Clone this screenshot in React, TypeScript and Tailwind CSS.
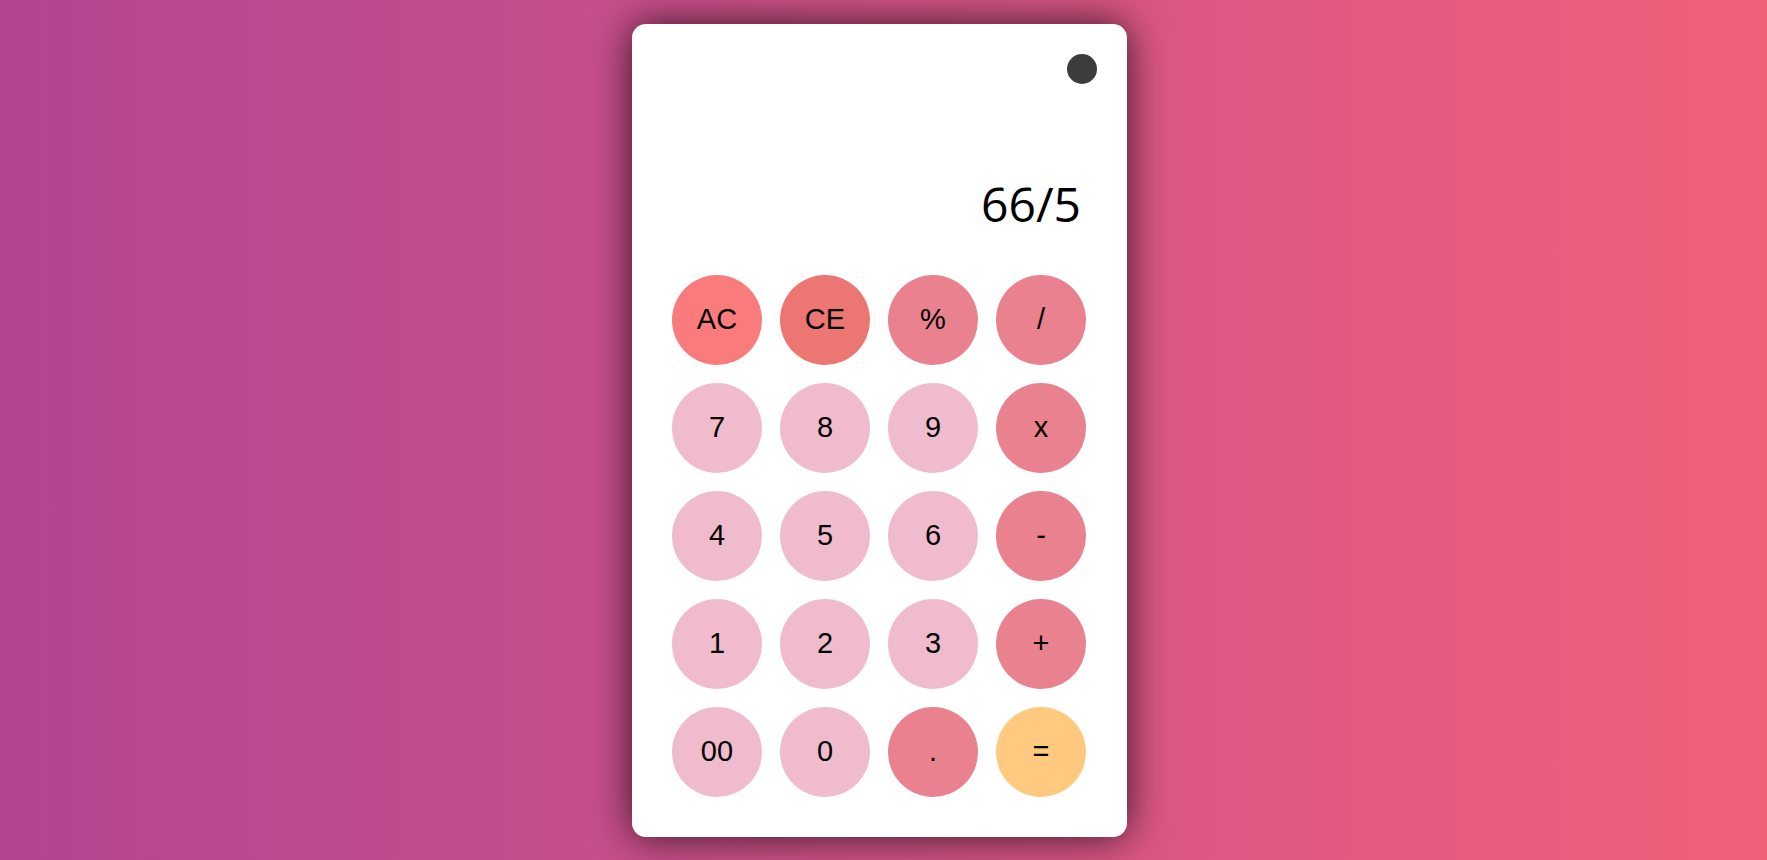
export default function App() {
  const keys: { label: string; color: string }[] = [
    { label: "AC", color: "bg-[#fa7b7b]" },
    { label: "CE", color: "bg-[#ec7672]" },
    { label: "%", color: "bg-[#ea818f]" },
    { label: "/", color: "bg-[#ea818f]" },
    { label: "7", color: "bg-[#f0bccd]" },
    { label: "8", color: "bg-[#f0bccd]" },
    { label: "9", color: "bg-[#f0bccd]" },
    { label: "x", color: "bg-[#ea818f]" },
    { label: "4", color: "bg-[#f0bccd]" },
    { label: "5", color: "bg-[#f0bccd]" },
    { label: "6", color: "bg-[#f0bccd]" },
    { label: "-", color: "bg-[#ea818f]" },
    { label: "1", color: "bg-[#f0bccd]" },
    { label: "2", color: "bg-[#f0bccd]" },
    { label: "3", color: "bg-[#f0bccd]" },
    { label: "+", color: "bg-[#ea818f]" },
    { label: "00", color: "bg-[#f0bccd]" },
    { label: "0", color: "bg-[#f0bccd]" },
    { label: ".", color: "bg-[#ea818f]" },
    { label: "=", color: "bg-[#ffca80]" },
  ];

  return (
    <main className="min-h-screen h-[860px] bg-gradient-to-r from-[#b24592] to-[#f15f79] flex justify-center pt-[24px] pr-[8px]">
      <div className="w-[495px] h-[813px] bg-white rounded-[14px] shadow-[0_0_40px_rgba(0,0,0,0.75)] pt-[30px] pb-[40px]">
        <div className="flex justify-end px-[30px]">
          <div className="w-[30px] h-[30px] rounded-full bg-[#3c3c3c]" />
        </div>

        <div className="pl-[40px] pr-[41px]">
          <div className="mt-[87px] h-[65px] leading-[65px] text-right pr-[5px] text-[48px] text-black font-['Open_Sans',sans-serif]">
            66/5
          </div>

          <div className="mt-[39px] grid grid-cols-[repeat(4,90px)] gap-[18px] justify-start">
            {keys.map((k) => (
              <button
                key={k.label}
                className={`w-[90px] h-[90px] rounded-full ${k.color} flex items-center justify-center text-[29px] text-black font-['Liberation_Sans',Arial,sans-serif]`}
              >
                {k.label}
              </button>
            ))}
          </div>
        </div>
      </div>
    </main>
  );
}
